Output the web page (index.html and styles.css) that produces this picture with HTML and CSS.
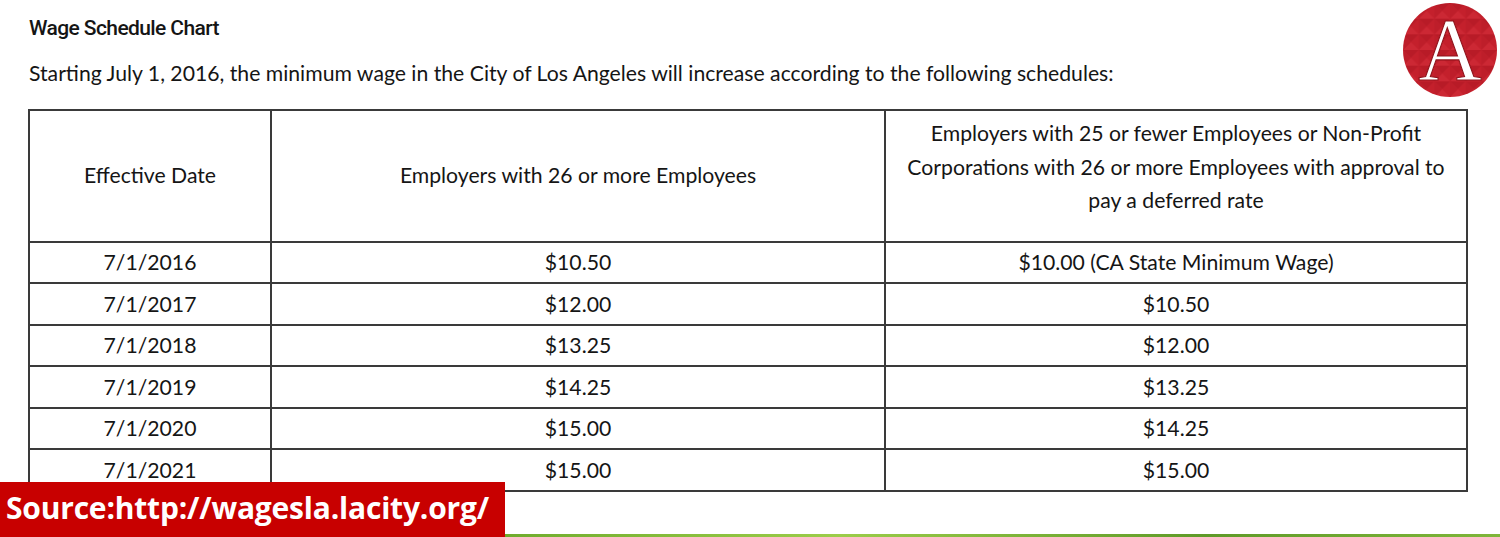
FILE: index.html
```html
<!DOCTYPE html>
<html lang="en">
<head>
<meta charset="utf-8">
<title>Wage Schedule Chart</title>
<link rel="stylesheet" href="styles.css">
</head>
<body>
<main class="page">
  <h2 class="title">Wage Schedule Chart</h2>
  <p class="intro">Starting July 1, 2016, the minimum wage in the City of Los Angeles will increase according to the following schedules:</p>
  <table class="wage">
    <colgroup>
      <col class="c1"><col class="c2"><col class="c3">
    </colgroup>
    <thead>
      <tr>
        <th>Effective Date</th>
        <th>Employers with 26 or more Employees</th>
        <th><p class="long">Employers with 25 or fewer Employees or Non-Profit Corporations with 26 or more Employees with approval to pay a deferred rate</p></th>
      </tr>
    </thead>
    <tbody>
      <tr><td>7/1/2016</td><td>$10.50</td><td>$10.00 (CA State Minimum Wage)</td></tr>
      <tr><td>7/1/2017</td><td>$12.00</td><td>$10.50</td></tr>
      <tr><td>7/1/2018</td><td>$13.25</td><td>$12.00</td></tr>
      <tr><td>7/1/2019</td><td>$14.25</td><td>$13.25</td></tr>
      <tr><td>7/1/2020</td><td>$15.00</td><td>$14.25</td></tr>
      <tr><td>7/1/2021</td><td>$15.00</td><td>$15.00</td></tr>
    </tbody>
  </table>
  <div class="strip"></div>
</main>

<div class="logo">
  <svg class="logo-bg" width="94" height="94" viewBox="0 0 96 96" aria-hidden="true">
    <defs>
      <pattern id="tri" width="16" height="16" patternUnits="userSpaceOnUse">
        <rect width="16" height="16" fill="#c4202c"/>
        <path d="M0 0 L16 0 L8 8 Z" fill="#b81b27"/>
        <path d="M0 16 L8 8 L16 16 Z" fill="#cc2834"/>
        <path d="M0 0 L8 8 L0 16 Z" fill="#be1e2a"/>
      </pattern>
    </defs>
    <circle cx="48" cy="48" r="48" fill="url(#tri)"/>
  </svg>
  <span class="logo-a">A</span>
</div>

<div class="source">Source:http://wagesla.lacity.org/</div>
</body>
</html>
```

FILE: styles.css
```css
html, body {
  margin: 0;
  padding: 0;
  background: #ffffff;
}

body {
  width: 1500px;
  height: 537px;
  overflow: hidden;
  position: relative;
  font-family: Lato, "Open Sans", sans-serif;
  color: #151515;
}

.page {
  padding: 16px 34px 0 28px;
}

.title {
  margin: 0 0 0 1px;
  font-family: Roboto, "Liberation Sans", sans-serif;
  font-weight: 500;
  font-size: 21px;
  line-height: 24px;
  letter-spacing: -0.6px;
  color: #151515;
}

.intro {
  margin: 20px 0 0 1px;
  font-size: 21.2px;
  line-height: 26px;
  color: #151515;
}

.wage {
  margin-top: 23px;
  width: 1438px;
  border-collapse: collapse;
  table-layout: fixed;
  font-size: 21.2px;
  color: #151515;
}

.c1 { width: 242px; }
.c2 { width: 614px; }
.c3 { width: 582px; }

.wage th,
.wage td {
  border: 2px solid #3a3a3a;
  text-align: center;
  vertical-align: middle;
  font-weight: 400;
  padding: 0 10px;
}

.wage th {
  height: 122px;
  line-height: 33.5px;
}

.wage td {
  height: 39.5px;
  line-height: 26px;
}

.long {
  margin: 6px 0 23px;
}

.strip {
  margin-top: 42px;
  margin-right: -34px;
  height: 4px;
  background: linear-gradient(90deg, #8cc040 0%, #6aa82a 30%, #9ccd4a 55%, #5e9a28 80%, #7fb63a 100%);
}

.logo {
  position: absolute;
  top: 3px;
  left: 1403px;
  width: 94px;
  height: 94px;
}

.logo-bg {
  display: block;
}

.logo-a {
  position: absolute;
  left: 0;
  top: -2px;
  width: 94px;
  height: 97px;
  text-align: center;
  font-family: "Liberation Serif", "DejaVu Serif", serif;
  font-size: 88px;
  line-height: 97px;
  color: #ffffff;
  -webkit-text-stroke: 1.1px #8e1119;
}

.source {
  position: absolute;
  left: 0;
  top: 482px;
  width: 505px;
  height: 55px;
  box-sizing: border-box;
  padding-left: 6px;
  background: #c80000;
  color: #ffffff;
  font-family: "Open Sans", "DejaVu Sans", sans-serif;
  font-weight: 700;
  font-size: 30px;
  line-height: 51px;
  letter-spacing: -0.2px;
  white-space: nowrap;
}
```
